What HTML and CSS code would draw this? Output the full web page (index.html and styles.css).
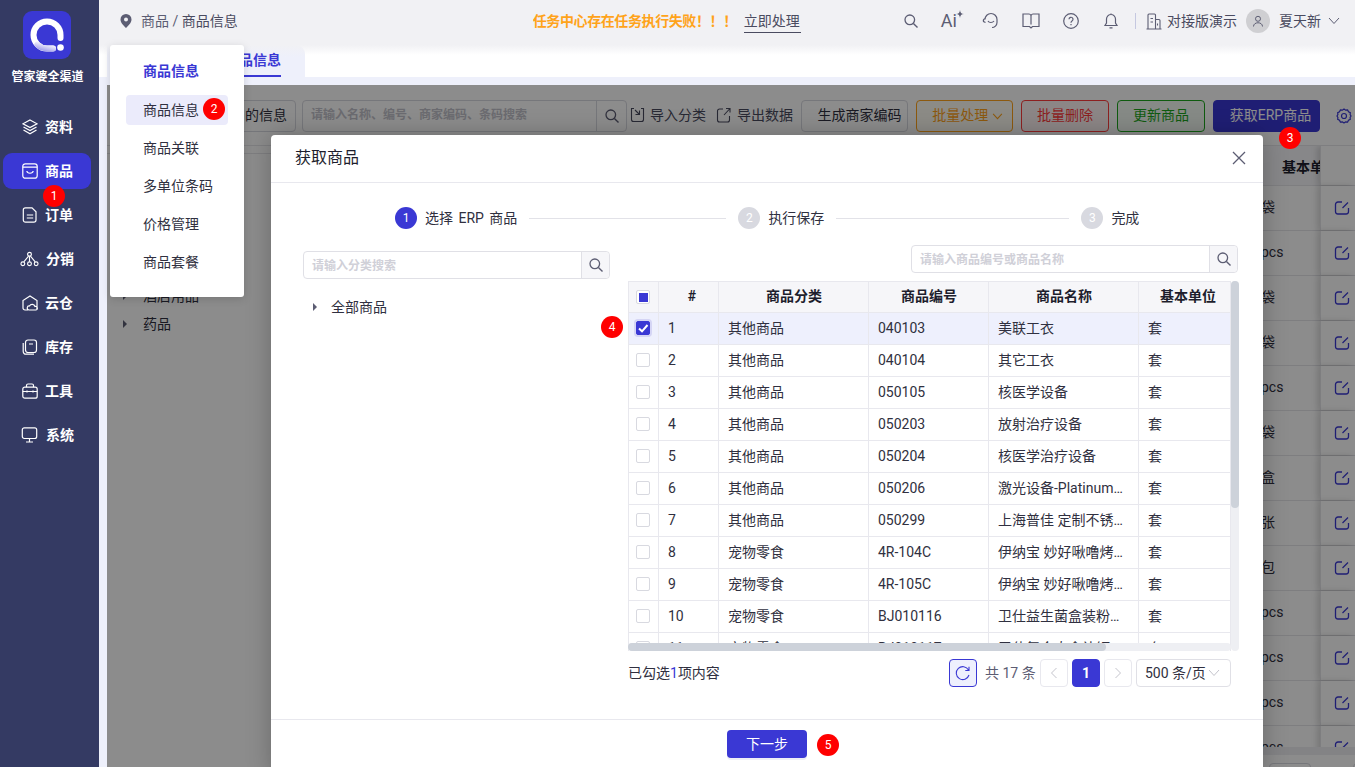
FILE: index.html
```html
<!DOCTYPE html>
<html lang="zh-CN">
<head>
<meta charset="utf-8">
<title>商品信息</title>
<link rel="stylesheet" href="styles.css">
</head>
<body>
<svg class="defs" width="0" height="0">
  <symbol id="i-search" viewBox="0 0 16 16"><circle cx="6.800" cy="6.800" r="4.800" fill="none" stroke="currentColor" stroke-width="1.300"/><path d="M10.400 10.400L14.500 14.500" stroke="currentColor" stroke-width="1.400" fill="none"/></symbol>
  <symbol id="i-edit" viewBox="0 0 16 16"><path d="M8 2H4a2.500 2.500 0 0 0-2.500 2.500v7A2.500 2.500 0 0 0 4 14h8a2.500 2.500 0 0 0 2.500-2.500V8" fill="none" stroke="currentColor" stroke-width="1.300"/><path d="M8.500 8L14 2.500" stroke="currentColor" stroke-width="1.300" fill="none"/></symbol>
  <linearGradient id="logo-fade" x1="0" y1="1" x2="1" y2="0"><stop offset="0" stop-color="#aaa8ec"/><stop offset="1" stop-color="#fff"/></linearGradient>
</svg>
<div class="app">
  <aside class="sidebar">
    <div class="logo">
      <svg viewBox="0 0 48 48" width="48" height="48"><path d="M37.500 27v-3a13.500 13.500 0 1 0-13.500 13.500h6" fill="none" stroke="#fff" stroke-width="6" stroke-linecap="round"/><path d="M14.500 33.500a13.500 13.500 0 0 0 9.500 4h6" fill="none" stroke="url(#logo-fade)" stroke-width="6" stroke-linecap="round"/><circle cx="37.500" cy="36.500" r="3.300" fill="#fff"/></svg>
    </div>
    <div class="brand">管家婆全渠道</div>
    <nav class="nav">
      <a class="nav-item"><svg class="nav-icon" viewBox="0 0 16 16"><path d="M8 1L15 4.800 8 8.600 1 4.800z M1.500 8L8 11.500 14.500 8 M1.500 11L8 14.800 14.500 11"/></svg>资料</a>
      <a class="nav-item active"><svg class="nav-icon" viewBox="0 0 16 16"><rect x=".8" y=".8" width="14.400" height="14.400" rx="2.500"/><path d="M.8 4.200h14.400 M4.800 8c.5 3 5.900 3 6.400 0"/></svg>商品</a>
      <a class="nav-item"><svg class="nav-icon" viewBox="0 0 16 16"><path d="M3.500 .8H10l4 4V13a2.200 2.200 0 0 1-2.200 2.200H3.500A2.200 2.200 0 0 1 1.300 13V3A2.200 2.200 0 0 1 3.500 .8z M4.800 8h6.400 M4.800 11h6.400"/></svg>订单</a>
      <a class="nav-item wide"><svg class="nav-icon big" viewBox="0 0 20 16"><circle cx="10" cy="3" r="2"/><circle cx="3" cy="13" r="2"/><circle cx="10" cy="13" r="2"/><circle cx="17" cy="13" r="2"/><path d="M10 5v6 M9 5L4 11 M11 5l5 6"/></svg>分销</a>
      <a class="nav-item"><svg class="nav-icon" viewBox="0 0 16 16"><path d="M6 15H3a2 2 0 0 1-2-2V5.500L8 1l7 4.500V13a2 2 0 0 1-.5 1.300 M7 15a2 2 0 0 1 .5-4 3 3 0 0 1 5.500.500 1.800 1.800 0 0 1 1 3.500z"/></svg>云仓</a>
      <a class="nav-item"><svg class="nav-icon" viewBox="0 0 16 16"><rect x="3.500" y="1" width="11" height="12.500" rx="2.500"/><path d="M1.200 4v8.500A2.700 2.700 0 0 0 4 15.200h8 M7 5h4"/></svg>库存</a>
      <a class="nav-item"><svg class="nav-icon" viewBox="0 0 16 16"><rect x=".8" y="4.200" width="14.400" height="11" rx="2"/><path d="M4.500 4.200V2.500A1.500 1.500 0 0 1 6 1h4a1.500 1.500 0 0 1 1.500 1.500v1.700 M.8 8.500h14.400 M5 7.500v2 M11 7.500v2"/></svg>工具</a>
      <a class="nav-item wide"><svg class="nav-icon big" viewBox="0 0 16 16"><rect x=".8" y=".8" width="14.400" height="10.700" rx="2"/><path d="M8 11.500v3 M4.500 15h7"/></svg>系统</a>
    </nav>
  </aside>

  <div class="main">
    <header class="topbar">
      <svg class="pin" viewBox="0 0 12 14" width="12" height="14"><path fill-rule="evenodd" d="M6 0a5.500 5.500 0 0 1 5.500 5.500C11.500 9 8 12 6 14 4 12 .5 9 .5 5.500A5.500 5.500 0 0 1 6 0zm0 3.500a2 2 0 1 0 0 4 2 2 0 0 0 0-4z"/></svg>
      <div class="crumbs">商品 / <span class="crumb-current">商品信息</span></div>
      <div class="notice"><span class="notice-text">任务中心存在任务执行失败！！！</span><a class="notice-link">立即处理</a></div>
      <div class="tools">
        <svg class="tool" viewBox="0 0 16 16"><use href="#i-search"/></svg>
        <div class="tool-ai">Ai<svg class="spark" viewBox="0 0 8 8"><path d="M4 0C4.300 2.700 5.300 3.700 8 4 5.300 4.300 4.300 5.300 4 8 3.700 5.300 2.700 4.300 0 4 2.700 3.700 3.700 2.700 4 0z"/></svg></div>
        <svg class="tool wide-tool" viewBox="0 0 18 18"><path d="M3 7.500a6 6 0 0 1 12 0v3c0 3-2.500 5-5 5 M3 6.500c-1 .5-2 1.500-1.500 3l2 1 M6 9c1 2 4.500 2 6 0"/></svg>
        <svg class="tool wide-tool" viewBox="0 0 18 16"><path d="M9 2.500C8.500 1.500 8 1 7 1H1v12.500h6.500L9 15l1.500-1.500H17V1h-6c-1 0-1.500.5-2 1.500z M9 2.500v9"/></svg>
        <svg class="tool" viewBox="0 0 16 16"><circle cx="8" cy="8" r="7.300"/><path d="M6 6.300a2 2 0 1 1 3 1.700c-.8.500-1 .9-1 1.700 M8 11v1.200"/></svg>
        <svg class="tool" viewBox="0 0 16 16"><path d="M8 1.500a4.500 4.500 0 0 0-4.500 4.500v4L2 12.500h12L12.500 10V6A4.500 4.500 0 0 0 8 1.500z M8 .5v1 M6.500 14.800h3"/></svg>
      </div>
      <span class="divider"></span>
      <svg class="building" viewBox="0 0 16 17"><path d="M.5 16h15 M2 16V2a1 1 0 0 1 1-1h5.500a1 1 0 0 1 1 1v14 M9.500 6.500H13a1 1 0 0 1 1 1V16 M4.500 5.500h2.500 M4.500 9h2.500 M11.500 10.500v2"/></svg>
      <span class="org">对接版演示</span>
      <span class="avatar"><svg viewBox="0 0 12 12" width="12" height="12"><circle cx="6" cy="3.800" r="2.500"/><path d="M1.500 11.500c0-5 9-5 9 0"/></svg></span>
      <span class="user">夏天新</span>
      <svg class="chev" viewBox="0 0 12 8" width="12" height="8"><path d="M1 1l5 5.500L11 1"/></svg>
    </header>

    <div class="tabs">
      <div class="tab"><span class="tab-label">商品信息</span></div>
    </div>

    <div class="content">
      <section class="page">
        <div class="toolbar">
          <button class="btn btn-left">显示已停用的信息</button>
          <div class="search-bar">
            <span class="search-ph">请输入名称、编号、商家编码、条码搜索</span>
            <span class="search-btn"><svg class="search-ic" viewBox="0 0 16 16"><use href="#i-search"/></svg></span>
          </div>
          <a class="link link-import"><svg class="link-ic" viewBox="0 0 16 16"><path d="M5 1.500H2.500v11a2 2 0 0 0 2 2h8a2 2 0 0 0 2-2v-11H12 M6 3l4.500 4.500 M10.500 3.500v4h-4"/></svg>导入分类</a>
          <a class="link link-export"><svg class="link-ic" viewBox="0 0 16 16"><path d="M7 2H3.500a2 2 0 0 0-2 2v9a2 2 0 0 0 2 2h8a2 2 0 0 0 2-2V9 M8 8l6-6.500 M10 1.500h4v4"/></svg>导出数据</a>
          <button class="btn btn-code">生成商家编码</button>
          <button class="btn btn-orange">批量处理 <svg class="btn-chev" viewBox="0 0 12 8" width="11" height="7"><path d="M1 1l5 5.500L11 1"/></svg></button>
          <button class="btn btn-red">批量删除</button>
          <button class="btn btn-green">更新商品</button>
          <button class="btn btn-primary">获取ERP商品</button>
          <svg class="gear" viewBox="0 0 16 16"><path d="M8 1l1.600 1.200 2-.2.900 1.800 1.800.9-.2 2L15 8l-.9 1.300.2 2-1.800.9-.9 1.800-2-.2L8 15l-1.600-1.200-2 .2-.9-1.800-1.800-.9.2-2L1 8l.9-1.300-.2-2 1.800-.9.900-1.800 2 .2z"/><circle cx="8" cy="8" r="2.500"/></svg>
        </div>
        <div class="page-body">
          <div class="tree">
            <div class="tree-item"><span class="caret"></span>酒店用品</div>
            <div class="tree-item"><span class="caret"></span>药品</div>
          </div>
          <div class="back-wrap">
            <div class="back-table">
              <div class="back-row back-head"><span class="back-fill"></span><span class="back-unit-head">基本单位</span><span class="back-action"></span></div>
              <div class="back-row"><span class="back-fill"></span><span class="back-unit">袋</span><span class="back-action"><svg class="edit" viewBox="0 0 16 16"><use href="#i-edit"/></svg></span></div>
              <div class="back-row"><span class="back-fill"></span><span class="back-unit">pcs</span><span class="back-action"><svg class="edit" viewBox="0 0 16 16"><use href="#i-edit"/></svg></span></div>
              <div class="back-row"><span class="back-fill"></span><span class="back-unit">袋</span><span class="back-action"><svg class="edit" viewBox="0 0 16 16"><use href="#i-edit"/></svg></span></div>
              <div class="back-row"><span class="back-fill"></span><span class="back-unit">袋</span><span class="back-action"><svg class="edit" viewBox="0 0 16 16"><use href="#i-edit"/></svg></span></div>
              <div class="back-row"><span class="back-fill"></span><span class="back-unit">pcs</span><span class="back-action"><svg class="edit" viewBox="0 0 16 16"><use href="#i-edit"/></svg></span></div>
              <div class="back-row"><span class="back-fill"></span><span class="back-unit">袋</span><span class="back-action"><svg class="edit" viewBox="0 0 16 16"><use href="#i-edit"/></svg></span></div>
              <div class="back-row"><span class="back-fill"></span><span class="back-unit">盒</span><span class="back-action"><svg class="edit" viewBox="0 0 16 16"><use href="#i-edit"/></svg></span></div>
              <div class="back-row"><span class="back-fill"></span><span class="back-unit">张</span><span class="back-action"><svg class="edit" viewBox="0 0 16 16"><use href="#i-edit"/></svg></span></div>
              <div class="back-row"><span class="back-fill"></span><span class="back-unit">包</span><span class="back-action"><svg class="edit" viewBox="0 0 16 16"><use href="#i-edit"/></svg></span></div>
              <div class="back-row"><span class="back-fill"></span><span class="back-unit">pcs</span><span class="back-action"><svg class="edit" viewBox="0 0 16 16"><use href="#i-edit"/></svg></span></div>
              <div class="back-row"><span class="back-fill"></span><span class="back-unit">pcs</span><span class="back-action"><svg class="edit" viewBox="0 0 16 16"><use href="#i-edit"/></svg></span></div>
              <div class="back-row"><span class="back-fill"></span><span class="back-unit">pcs</span><span class="back-action"><svg class="edit" viewBox="0 0 16 16"><use href="#i-edit"/></svg></span></div>
              <div class="back-row"><span class="back-fill"></span><span class="back-unit">pcs</span><span class="back-action"><svg class="edit" viewBox="0 0 16 16"><use href="#i-edit"/></svg></span></div>
            </div>
            <div class="back-scroll"></div>
            <div class="back-pager"><span class="back-page"></span><span class="back-page"></span></div>
          </div>
        </div>
      </section>
    </div>
  </div>

  <div class="mask"></div>

  <div class="menu">
    <div class="menu-title">商品信息</div>
    <a class="menu-item current">商品信息</a>
    <a class="menu-item">商品关联</a>
    <a class="menu-item">多单位条码</a>
    <a class="menu-item">价格管理</a>
    <a class="menu-item">商品套餐</a>
  </div>

  <div class="modal">
    <div class="modal-head">
      <span class="modal-title">获取商品</span>
      <svg class="close" viewBox="0 0 14 14" width="14" height="14"><path d="M1 1l12 12 M13 1L1 13"/></svg>
    </div>
    <div class="steps">
      <span class="step-dot on">1</span><span class="step-text">选择 ERP 商品</span><span class="step-line line-a"></span>
      <span class="step-dot">2</span><span class="step-text">执行保存</span><span class="step-line line-b"></span>
      <span class="step-dot">3</span><span class="step-text">完成</span>
    </div>
    <div class="panels">
      <div class="panel-left">
        <div class="input-group">
          <span class="input-ph">请输入分类搜索</span>
          <span class="input-btn"><svg class="search-ic" viewBox="0 0 16 16"><use href="#i-search"/></svg></span>
        </div>
        <div class="cat-item"><span class="caret"></span>全部商品</div>
      </div>
      <div class="panel-right">
        <div class="input-group right-search">
          <span class="input-ph">请输入商品编号或商品名称</span>
          <span class="input-btn"><svg class="search-ic" viewBox="0 0 16 16"><use href="#i-search"/></svg></span>
        </div>
        <div class="grid-wrap">
          <table class="grid">
            <colgroup><col class="c-check"><col class="c-num"><col class="c-cat"><col class="c-code"><col class="c-name"><col class="c-unit"></colgroup>
            <thead>
              <tr><th class="th-check"><span class="check partial"></span></th><th class="th-num">#</th><th>商品分类</th><th>商品编号</th><th>商品名称</th><th class="th-unit">基本单位</th></tr>
            </thead>
            <tbody>
              <tr class="selected"><td class="cc"><span class="check checked"><svg viewBox="0 0 12 12" width="12" height="12"><path d="M2 6.500l3 2.800L10.500 3"/></svg></span></td><td>1</td><td>其他商品</td><td>040103</td><td>美联工衣</td><td>套</td></tr>
              <tr><td class="cc"><span class="check"></span></td><td>2</td><td>其他商品</td><td>040104</td><td>其它工衣</td><td>套</td></tr>
              <tr><td class="cc"><span class="check"></span></td><td>3</td><td>其他商品</td><td>050105</td><td>核医学设备</td><td>套</td></tr>
              <tr><td class="cc"><span class="check"></span></td><td>4</td><td>其他商品</td><td>050203</td><td>放射治疗设备</td><td>套</td></tr>
              <tr><td class="cc"><span class="check"></span></td><td>5</td><td>其他商品</td><td>050204</td><td>核医学治疗设备</td><td>套</td></tr>
              <tr><td class="cc"><span class="check"></span></td><td>6</td><td>其他商品</td><td>050206</td><td>激光设备-PlatinumElite</td><td>套</td></tr>
              <tr><td class="cc"><span class="check"></span></td><td>7</td><td>其他商品</td><td>050299</td><td>上海普佳 定制不锈钢器械柜</td><td>套</td></tr>
              <tr><td class="cc"><span class="check"></span></td><td>8</td><td>宠物零食</td><td>4R-104C</td><td>伊纳宝 妙好啾噜烤鸡肉条</td><td>套</td></tr>
              <tr><td class="cc"><span class="check"></span></td><td>9</td><td>宠物零食</td><td>4R-105C</td><td>伊纳宝 妙好啾噜烤鸡肉条</td><td>套</td></tr>
              <tr><td class="cc"><span class="check"></span></td><td>10</td><td>宠物零食</td><td>BJ010116</td><td>卫仕益生菌盒装粉剂调理肠胃</td><td>套</td></tr>
              <tr><td class="cc"><span class="check"></span></td><td>11</td><td>宠物零食</td><td>BJ010117</td><td>卫仕复合肉食补钙</td><td>套</td></tr>
            </tbody>
          </table>
          <div class="sb-v"><div class="sb-v-thumb"></div></div>
          <div class="sb-h"><div class="sb-h-thumb"></div></div>
        </div>
        <div class="pager">
          <span class="picked">已勾选<span class="picked-n">1</span>项内容</span>
          <span class="pg-refresh"><svg viewBox="0 0 16 16" width="16" height="16"><path d="M13.500 5A6.500 6.500 0 1 0 14 10 M14 1.800V5.500h-3.700"/></svg></span>
          <span class="pg-total">共 17 条</span>
          <span class="pg-btn"><svg viewBox="0 0 8 12" width="8" height="12"><path d="M6.500 1L1.500 6l5 5"/></svg></span>
          <span class="pg-btn pg-on">1</span>
          <span class="pg-btn"><svg viewBox="0 0 8 12" width="8" height="12"><path d="M1.500 1l5 5-5 5"/></svg></span>
          <span class="pg-size">500 条/页<svg viewBox="0 0 12 8" width="12" height="8"><path d="M1 1l5 5.500L11 1"/></svg></span>
        </div>
      </div>
    </div>
    <div class="modal-foot"><button class="next">下一步</button></div>
  </div>

  <span class="badge b1">1</span>
  <span class="badge b2">2</span>
  <span class="badge b3">3</span>
  <span class="badge b4">4</span>
  <span class="badge b5">5</span>
</div>
</body>
</html>
```
FILE: styles.css
```css
* { box-sizing: border-box; }
html, body { margin: 0; padding: 0; height: 100%; overflow: hidden; }
body { font: 14px/20px Roboto, "Noto Sans CJK SC", sans-serif; color: #303040; background: #fff; }
.defs { position: absolute; }
.app { position: relative; display: flex; width: 1355px; height: 767px; overflow: hidden; }

/* sidebar */
.sidebar { flex: 0 0 99px; background: #343a63; padding-top: 11px; color: #fff; }
.logo { width: 48px; height: 48px; margin: 0 0 0 23px; background: #3a38d4; border-radius: 9px; }
.logo svg { display: block; }
.brand { margin: 9px 0 0 -4px; font-size: 12px; line-height: 18px; font-weight: 700; text-align: center; white-space: nowrap; }
.nav { margin-top: 23px; display: flex; flex-direction: column; gap: 8px; }
.nav-item { display: flex; align-items: center; gap: 7px; height: 36px; margin: 0 8px 0 3px; padding-left: 19px; border-radius: 9px; font-weight: 700; font-size: 14px; }
.nav-item.active { background: #3a38d4; }
.nav-item.wide { padding-left: 17px; }
.nav-icon { width: 16px; height: 16px; fill: none; stroke: #fff; stroke-width: 1.200; flex: none; }
.nav-icon.big { width: 19px; height: 16px; }

/* main */
.main { flex: 1; min-width: 0; display: flex; flex-direction: column; }
.topbar { flex: 0 0 45px; display: flex; align-items: center; background: #f1f1f4; padding: 0 15px 3px 21px; color: #5c5d73; font-size: 14px; }
.pin { fill: #5c5d73; flex: none; }
.crumbs { margin-left: 9px; white-space: nowrap; }
.crumb-current { color: #4a4b60; }
.notice { margin-left: 295px; display: flex; align-items: center; white-space: nowrap; }
.notice-text { color: #ffa31a; font-weight: 700; width: 204px; overflow: hidden; letter-spacing: -.4px; }
.notice-link { margin-left: 7px; color: #4a4b60; padding: 2px 1px 1px 0; border-bottom: 1px solid #4a4b60; }
.tools { margin-left: 100px; display: flex; align-items: center; gap: 20px; }
.tool { width: 16px; height: 16px; margin: 0 2px; fill: none; stroke: #5c5d73; stroke-width: 1.200; color: #5c5d73; flex: none; display: block; }
.wide-tool { width: 18px; height: 18px; margin: 0 1px; }
.tool-ai { width: 20px; position: relative; font-size: 18px; line-height: 20px; color: #5c5d73; }
.spark { position: absolute; left: 15px; top: -1px; width: 8px; height: 8px; fill: #5c5d73; }
.divider { width: 1px; height: 16px; background: #c5c8e0; margin-left: 14px; }
.building { width: 16px; height: 17px; margin-left: 11px; fill: none; stroke: #5c5d73; stroke-width: 1.100; flex: none; }
.org { margin-left: 5px; white-space: nowrap; color: #4a4b60; }
.avatar { width: 24px; height: 24px; margin-left: 9px; border-radius: 50%; background: #cfcfd2; display: flex; align-items: center; justify-content: center; flex: none; }
.avatar svg { fill: none; stroke: #5c5d73; stroke-width: 1; }
.user { margin-left: 9px; color: #4a4b60; white-space: nowrap; }
.chev { margin-left: 7px; fill: none; stroke: #5c5d73; stroke-width: 1; flex: none; }

.tabs { flex: 0 0 32px; background: linear-gradient(#f1f1f4, #fff 10px); padding-left: 8px; }
.tab { width: 198px; height: 32px; padding: 0 0 0 118px; background: linear-gradient(#f1f1f4, #eef0fb 12px); border-top-right-radius: 9px; display: flex; }
.tab-label { height: 32px; padding-top: 5px; border-bottom: 2px solid #3a38d4; color: #3a38d4; font-weight: 700; white-space: nowrap; }

.content { flex: 1; min-height: 0; background: #eef0fb; padding: 8px 0 0 8px; display: flex; }
.page { flex: 1; min-width: 0; background: #fff; display: flex; flex-direction: column; }

/* toolbar beneath the mask */
.toolbar { flex: 0 0 61px; display: flex; justify-content: flex-end; align-items: flex-start; padding: 15px 3px 0 0; border-bottom: 1px solid #e5e5ea; }
.btn { height: 32px; padding: 0 0 2px; border: 1px solid #d8d9e0; border-radius: 4px; background: #fff; font: inherit; color: #303040; white-space: nowrap; }
.btn-left { width: 140px; margin-right: 6px; text-align: right; padding-right: 8px; }
.search-bar { width: 325px; height: 32px; border: 1px solid #d8d9e0; border-radius: 4px; display: flex; margin-right: 2px; }
.search-ph { flex: 1; padding: 4px 0 0 8px; font-size: 12px; color: #c4c4cc; font-weight: 700; white-space: nowrap; }
.search-btn { width: 30px; border-left: 1px solid #d8d9e0; display: flex; align-items: center; justify-content: center; }
.search-ic { width: 16px; height: 16px; color: #5c5d73; }
.link { display: flex; align-items: center; gap: 5px; height: 30px; white-space: nowrap; color: #4a4b60; }
.link-ic { width: 16px; height: 16px; fill: none; stroke: #4a4b60; stroke-width: 1.100; flex: none; }
.link-import { width: 78px; margin-right: 9px; }
.link-export { width: 77px; margin-right: 8px; }
.btn-code { width: 107px; margin-right: 8px; padding-left: 10px; }
.btn-orange { width: 97px; margin-right: 8px; padding-left: 6px; color: #ffa31a; border-color: #ffa31a; background: #fffdf4; }
.btn-chev { fill: none; stroke: #ffa31a; stroke-width: 1.200; }
.btn-red { width: 88px; margin-right: 8px; color: #ff3b3b; border-color: #ff3b3b; background: #fff5f5; }
.btn-green { width: 88px; margin-right: 8px; color: #1da71d; border-color: #1da71d; background: #f4fbf4; }
.btn-primary { width: 107px; margin-right: 16px; color: #fff; border-color: #3a38d4; background: #3a38d4; padding-left: 8px; }
.gear { width: 16px; height: 16px; margin-top: 8px; fill: none; stroke: #3a38d4; stroke-width: 1.200; flex: none; }

.page-body { flex: 1; min-height: 0; display: flex; }
.tree { flex: 0 0 300px; margin-top: 7px; border-top: 1px solid #e5e5ea; padding: 128px 0 0 16px; }
.tree-item { height: 28px; display: flex; align-items: center; color: #303040; }
.caret { width: 0; height: 0; border-left: 4px solid #5c5d73; border-top: 4px solid transparent; border-bottom: 4px solid transparent; margin-right: 16px; flex: none; }
.back-wrap { flex: 1; min-width: 0; position: relative; }
.back-table { height: 601px; overflow: hidden; }
.back-row { display: flex; height: 45px; border-bottom: 1px solid #e5e5ea; }
.back-head { height: 40px; background: #f6f6f9; }
.back-fill { flex: 1; }
.back-unit { flex: 0 0 67px; padding: 11px 0 0 8px; }
.back-unit-head { flex: 0 0 67px; padding: 11px 0 0 29px; overflow: hidden; white-space: nowrap; font-weight: 700; color: #1e1e2d; }
.back-action { flex: 0 0 35px; border-left: 1px solid #e5e5ea; background: #fff; box-shadow: -3px 0 6px rgba(0,0,0,.15); padding: 14px 0 0 13px; }
.edit { display: block; width: 16px; height: 16px; color: #3a38d4; }
.back-scroll { height: 8px; background: #eeeff3; }
.back-pager { display: flex; justify-content: flex-end; gap: 42px; padding: 8px 0 0; margin-right: -40px; }
.back-page { width: 42px; height: 20px; border: 1px solid #d8d9e0; border-radius: 4px; }

/* overlays */
.mask { position: absolute; left: 107px; top: 85px; right: 0; bottom: 0; background: rgba(0,0,0,.45); }
.menu { position: absolute; left: 110px; top: 45px; width: 134px; height: 252px; background: #fff; border-radius: 3px; box-shadow: 0 2px 8px rgba(0,0,0,.15); padding: 16px; }
.menu-title { height: 20px; padding-left: 17px; color: #3a38d4; font-weight: 700; margin-bottom: 14px; }
.menu-item { display: flex; align-items: center; height: 30px; margin-bottom: 8px; padding-left: 17px; border-radius: 4px; color: #303040; white-space: nowrap; }
.menu-item.current { background: #ebebfb; }

.modal { position: absolute; left: 271px; top: 135px; width: 992px; height: 640px; background: #fff; border-radius: 4px; box-shadow: 0 0 24px rgba(0,0,0,.25); display: flex; flex-direction: column; }
.modal-head { flex: 0 0 48px; display: flex; align-items: center; justify-content: space-between; padding: 0 17px 2px 24px; border-bottom: 1px solid #e8e8ee; }
.modal-title { font-size: 16px; color: #1e1e2d; }
.close { fill: none; stroke: #5c5d73; stroke-width: 1.300; }
.steps { display: flex; align-items: center; padding: 24px 0 0 124px; }
.step-dot { width: 22px; height: 22px; border-radius: 50%; background: #d8d9e0; color: #fff; display: flex; align-items: center; justify-content: center; font-size: 12px; flex: none; }
.step-dot.on { background: #3a38d4; }
.step-text { margin: 0 12px 0 8px; white-space: nowrap; color: #303040; word-spacing: 2px; }
.step-line { height: 1px; background: #e2e2e8; margin-right: 12px; }
.line-a { width: 197px; }
.line-b { width: 233px; }
.panels { display: flex; padding: 16px 0 0 32px; }
.panel-left { flex: 0 0 307px; padding-top: 6px; margin-right: 18px; }
.input-group { height: 28px; border: 1px solid #e0e0e6; border-radius: 4px; display: flex; background: #fff; }
.input-ph { flex: 1; padding: 4px 0 0 8px; font-size: 12px; color: #d0d0d8; font-weight: 700; white-space: nowrap; }
.input-btn { width: 28px; border-left: 1px solid #e0e0e6; background: #f6f6f9; border-radius: 0 4px 4px 0; display: flex; align-items: center; justify-content: center; }
.cat-item { display: flex; align-items: center; height: 28px; margin-top: 14px; padding-left: 10px; color: #303040; }
.cat-item .caret { margin-right: 14px; }
.panel-right { flex: 0 0 611px; }
.right-search { width: 327px; margin-left: 283px; }
.grid-wrap { position: relative; margin-top: 8px; height: 370px; width: 611px; overflow: hidden; }
.grid { width: 603px; table-layout: fixed; border-collapse: separate; border-spacing: 0; border-top: 1px solid #e8e8ee; border-left: 1px solid #e8e8ee; }
.c-check { width: 30px; } .c-num { width: 60px; } .c-cat { width: 150px; } .c-code { width: 120px; } .c-name { width: 150px; } .c-unit { width: 92px; }
.grid th, .grid td { height: 32px; padding: 0 8px 2px 9px; border-right: 1px solid #e8e8ee; border-bottom: 1px solid #e8e8ee; white-space: nowrap; overflow: hidden; text-overflow: ellipsis; font-weight: 400; color: #303040; }
.grid th { height: 31px; background: #f6f6f9; font-weight: 700; color: #1e1e2d; text-align: center; }
.grid th.th-unit { padding-left: 15px; }
.grid th.th-num { padding-left: 15px; }
.grid th.th-check { padding: 0 1px 2px 0; }
.grid td.cc { padding: 0 1px 4px 0; text-align: center; }
.grid tr.selected td { background: #eef0fd; }
.check { display: inline-flex; align-items: center; justify-content: center; width: 14px; height: 14px; border: 1px solid #d8d9e0; border-radius: 2px; background: #fff; vertical-align: middle; }
.check.partial::after { content: ""; width: 9px; height: 9px; background: #3a38d4; }
.check.checked { background: #3a38d4; border-color: #3a38d4; box-shadow: 0 0 0 2px #d5d5f5; }
.check.checked svg { fill: none; stroke: #fff; stroke-width: 2; }
.sb-v { position: absolute; right: 0; top: 0; bottom: 0; width: 8px; background: #eeeff3; border-radius: 4px; }
.sb-v-thumb { height: 227px; background: #cdd2da; border-radius: 4px; }
.sb-h { position: absolute; left: 0; bottom: 0; width: 603px; height: 8px; background: #eeeff3; border-radius: 4px; }
.sb-h-thumb { width: 478px; height: 8px; background: #cdd2da; border-radius: 4px; }

.pager { display: flex; align-items: center; width: 603px; height: 28px; margin-top: 8px; }
.picked { margin-right: auto; color: #303040; }
.picked-n { color: #3a38d4; }
.pg-refresh { width: 28px; height: 28px; border: 1px solid #3a38d4; border-radius: 4px; background: #eef0fd; display: flex; align-items: center; justify-content: center; margin-right: 8px; }
.pg-refresh svg { fill: none; stroke: #3a38d4; stroke-width: 1.100; }
.pg-total { width: 51px; margin-right: 4px; white-space: nowrap; color: #5c5d73; }
.pg-btn { width: 28px; height: 28px; border: 1px solid #e8e8ee; border-radius: 4px; display: flex; align-items: center; justify-content: center; margin-right: 4px; }
.pg-btn svg { fill: none; stroke: #c4c4cc; stroke-width: 1; }
.pg-on { background: #3a38d4; border-color: #3a38d4; color: #fff; font-weight: 700; }
.pg-size { width: 95px; height: 28px; border: 1px solid #e0e0e6; border-radius: 4px; display: flex; align-items: center; justify-content: space-between; padding: 0 10px 0 8px; white-space: nowrap; }
.pg-size svg { fill: none; stroke: #c4c4cc; stroke-width: 1; }
.modal-foot { position: relative; margin-top: 32px; border-top: 1px solid #e8e8ee; padding-top: 10px; text-align: center; }
.next { width: 80px; height: 28px; border: 0; border-radius: 4px; background: #3a38d4; color: #fff; font: inherit; box-shadow: 0 2px 0 #eeeef6; }

.badge { position: absolute; width: 22px; height: 22px; border-radius: 50%; background: #ff0000; color: #fff; font-size: 12px; line-height: 22px; text-align: center; }
.b1 { left: 43px; top: 185px; }
.b2 { left: 203px; top: 98px; }
.b3 { left: 1279px; top: 127px; }
.b4 { left: 601px; top: 316px; }
.b5 { left: 817px; top: 734px; }
```
